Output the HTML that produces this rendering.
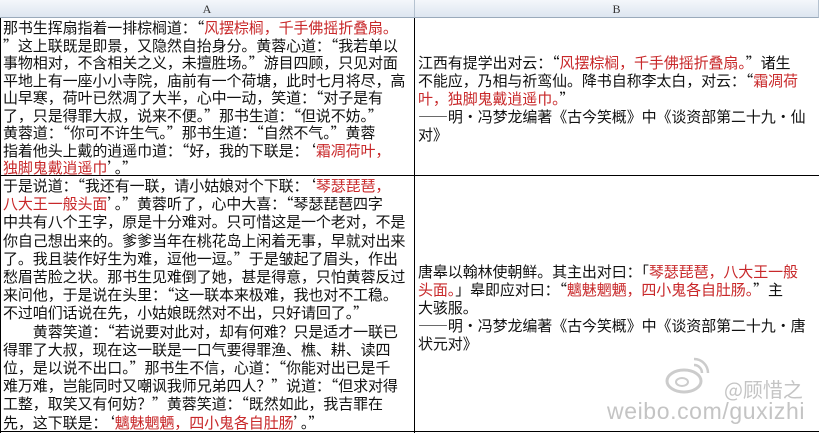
<!DOCTYPE html>
<html lang="zh-CN"><head><meta charset="utf-8"><style>
*{margin:0;padding:0;box-sizing:border-box}
body{width:819px;height:433px;background:#fff;position:relative;overflow:hidden;font-family:"Noto Sans CJK SC","WenQuanYi Zen Hei",sans-serif;color:#111}
.hdr{position:absolute;top:0;height:18px;background:linear-gradient(#f4f7fb,#dde6f0);border-bottom:1px solid #9aaabb;border-right:1px solid #b5c2d0;font-size:12px;text-align:center;line-height:18px;color:#333;font-family:"Liberation Serif",serif}
.vl{position:absolute;background:#000}
.t{position:absolute;font-size:15px;line-height:18.1px;white-space:nowrap;letter-spacing:-0.1px}
.r{color:#c8282a}
</style></head><body>
<div class="hdr" style="left:0;width:415px">A</div>
<div class="hdr" style="left:415px;width:404px">B</div>
<div class="vl" style="left:414px;top:18px;width:1px;height:415px"></div>
<div class="vl" style="left:0;top:175px;width:819px;height:1px"></div>
<div class="vl" style="left:0;top:431px;width:819px;height:1px"></div>
<div class="vl" style="left:0;top:18px;width:1px;height:415px"></div>

<div class="t" style="left:3px;top:19px;line-height:17.5px">
那书生挥扇指着一排棕榈道：“<span class="r">风摆棕榈，千手佛摇折叠扇。</span><br>
”这上联既是即景，又隐然自抬身分。黄蓉心道：“我若单以<br>
事物相对，不含相关之义，未擅胜场。”游目四顾，只见对面<br>
平地上有一座小小寺院，庙前有一个荷塘，此时七月将尽，高<br>
山早寒，荷叶已然凋了大半，心中一动，笑道：“对子是有<br>
了，只是得罪大叔，说来不便。”那书生道：“但说不妨。”<br>
黄蓉道：“你可不许生气。”那书生道：“自然不气。”黄蓉<br>
指着他头上戴的逍遥巾道：“好，我的下联是：‘<span class="r">霜凋荷叶，</span><br>
<span class="r">独脚鬼戴逍遥巾</span>’。”</div>

<div class="t" style="left:3px;top:177px;line-height:18.2px">
于是说道：“我还有一联，请小姑娘对个下联：‘<span class="r">琴瑟琵琶，</span><br>
<span class="r">八大王一般头面</span>’。”黄蓉听了，心中大喜：“琴瑟琵琶四字<br>
中共有八个王字，原是十分难对。只可惜这是一个老对，不是<br>
你自己想出来的。爹爹当年在桃花岛上闲着无事，早就对出来<br>
了。我且装作好生为难，逗他一逗。”于是皱起了眉头，作出<br>
愁眉苦脸之状。那书生见难倒了她，甚是得意，只怕黄蓉反过<br>
来问他，于是说在头里：“这一联本来极难，我也对不工稳。<br>
不过咱们话说在先，小姑娘既然对不出，只好请回了。”<br>
　　黄蓉笑道：“若说要对此对，却有何难？只是适才一联已<br>
得罪了大叔，现在这一联是一口气要得罪渔、樵、耕、读四<br>
位，是以说不出口。”那书生不信，心道：“你能对出已是千<br>
难万难，岂能同时又嘲讽我师兄弟四人？”说道：“但求对得<br>
工整，取笑又有何妨？”黄蓉笑道：“既然如此，我吉罪在<br>
先，这下联是：‘<span class="r">魑魅魍魉，四小鬼各自肚肠</span>’。”</div>

<div class="t" style="left:418px;top:54px">
江西有提学出对云：“<span class="r">风摆棕榈，千手佛摇折叠扇。</span>”诸生<br>
不能应，乃相与祈鸾仙。降书自称李太白，对云：“<span class="r">霜凋荷</span><br>
<span class="r">叶，独脚鬼戴逍遥巾。</span>”<br>
——明·冯梦龙编著《古今笑概》中《谈资部第二十九·仙<br>
对》</div>

<div class="t" style="left:418px;top:263px">
唐皋以翰林使朝鲜。其主出对曰：「<span class="r">琴瑟琵琶，八大王一般</span><br>
<span class="r">头面。</span>」皋即应对曰：“<span class="r">魑魅魍魉，四小鬼各自肚肠。</span>”主<br>
大骇服。<br>
——明·冯梦龙编著《古今笑概》中《谈资部第二十九·唐<br>
状元对》</div>

<svg style="position:absolute;left:662px;top:355px" width="50" height="40" viewBox="0 0 50 40">
<ellipse cx="22" cy="26" rx="17" ry="11" fill="none" stroke="#ccc" stroke-width="3"/>
<ellipse cx="20" cy="27" rx="6" ry="4" fill="none" stroke="#ccc" stroke-width="2"/>
<path d="M32 10 a8 8 0 0 1 8 8 M32 4 a14 14 0 0 1 14 14" fill="none" stroke="#ccc" stroke-width="2.5"/>
</svg>
<div style="position:absolute;left:724px;top:374px;font-size:20px;color:#c4c4c4;white-space:nowrap">@顾惜之</div>
<div style="position:absolute;left:607px;top:398px;font-size:23px;color:#c4c4c4;white-space:nowrap;font-family:'Liberation Sans',sans-serif;letter-spacing:0.6px">weibo.com/guxizhi</div>
</body></html>
